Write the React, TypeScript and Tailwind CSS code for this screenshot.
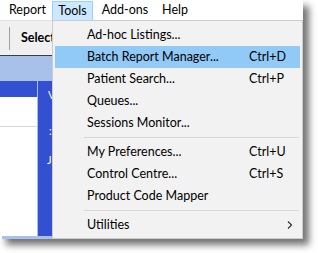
import React from "react";

const font = { fontFamily: 'Lato, "Noto Sans", sans-serif' };

type Item = { label: string; shortcut?: string; active?: boolean; arrow?: boolean };

const group1: Item[] = [
  { label: "Ad-hoc Listings..." },
  { label: "Batch Report Manager...", shortcut: "Ctrl+D", active: true },
  { label: "Patient Search...", shortcut: "Ctrl+P" },
  { label: "Queues..." },
  { label: "Sessions Monitor..." },
];
const group2: Item[] = [
  { label: "My Preferences...", shortcut: "Ctrl+U" },
  { label: "Control Centre...", shortcut: "Ctrl+S" },
  { label: "Product Code Mapper" },
];
const group3: Item[] = [{ label: "Utilities", arrow: true }];

function MenuItem({ item }: { item: Item }) {
  return (
    <div
      className={`relative h-[22px] flex items-center text-[12.5px] text-[#000] ${
        item.active ? "bg-[#91c9f7]" : ""
      }`}
    >
      <span className="absolute left-[32px] whitespace-nowrap">{item.label}</span>
      {item.shortcut && (
        <span className="absolute left-[194px] whitespace-nowrap">{item.shortcut}</span>
      )}
      {item.arrow && (
        <svg className="absolute left-[231px]" width="8" height="10" viewBox="0 0 8 10">
          <path d="M2 1.5 L5.5 5 L2 8.5" fill="none" stroke="#333" strokeWidth="1.2" />
        </svg>
      )}
    </div>
  );
}

function Sep() {
  return (
    <div className="h-[7px] flex items-center pl-[29px] pr-[1px]">
      <div className="h-px w-full bg-[#d7d7d7]" />
    </div>
  );
}

export default function App() {
  return (
    <div className="relative w-[318px] h-[253px] bg-white overflow-hidden" style={font}>
      <div className="relative w-[303px] h-[239px] bg-white shadow-[6px_6px_7px_rgba(0,0,0,0.55)] flex flex-col">
        {/* menu bar */}
        <div className="h-[20px] bg-white flex items-stretch text-[12.5px] text-black">
          <div className="w-[52px] flex items-center justify-center pl-[3px]">Report</div>
          <div className="w-[41px] mt-[1px] bg-[#cce8ff] border border-[#99d1ff] border-b-0 flex items-center justify-center">
            Tools
          </div>
          <div className="w-[62px] flex items-center justify-center pl-[2px]">Add-ons</div>
          <div className="w-[40px] flex items-center justify-center">Help</div>
        </div>
        {/* toolbar */}
        <div className="h-[35px] bg-[#f0f0f0] border-t border-[#e3e3e3] flex items-center">
          <div className="ml-[9px] w-px h-[23px] bg-[#a0a0a0]" />
          <div className="ml-[11px] w-[32px] overflow-hidden text-[12.5px] font-bold text-black whitespace-nowrap">
            Select
          </div>
        </div>
        <div className="h-px bg-[#3c3c3c]" />
        {/* light band */}
        <div className="h-[25px] bg-[#a7c1ea]" />
        {/* body */}
        <div className="flex-1 flex">
          <div className="w-[37px] flex flex-col bg-white">
            <div className="h-[16px] bg-[#3350d2]" />
            <div className="h-[29px]" />
            <div className="h-px bg-[#d8d8d8]" />
          </div>
          <div className="w-px bg-[#a7c1ea]" />
          <div className="flex-1 bg-[#3350d2] relative text-white text-[11px]">
            <div className="absolute left-0 top-0 w-[14px] h-full overflow-hidden">
              <div className="absolute left-[10px] top-[6px]">V</div>
              <div className="absolute left-[11px] top-[42px]">:</div>
              <div className="absolute left-[9px] top-[71px]">J</div>
            </div>
          </div>
        </div>
        <div className="h-[3px] bg-[#a7c1ea] ml-[2px]" />

        {/* dropdown menu */}
        <div className="absolute left-[52px] top-[20px] w-[251px] h-[219px] bg-[#f2f2f2] border border-[#cccccc] pt-[3px] px-[2px]">
          {group1.map((i) => (
            <MenuItem key={i.label} item={i} />
          ))}
          <Sep />
          {group2.map((i) => (
            <MenuItem key={i.label} item={i} />
          ))}
          <Sep />
          {group3.map((i) => (
            <MenuItem key={i.label} item={i} />
          ))}
        </div>
      </div>
    </div>
  );
}
